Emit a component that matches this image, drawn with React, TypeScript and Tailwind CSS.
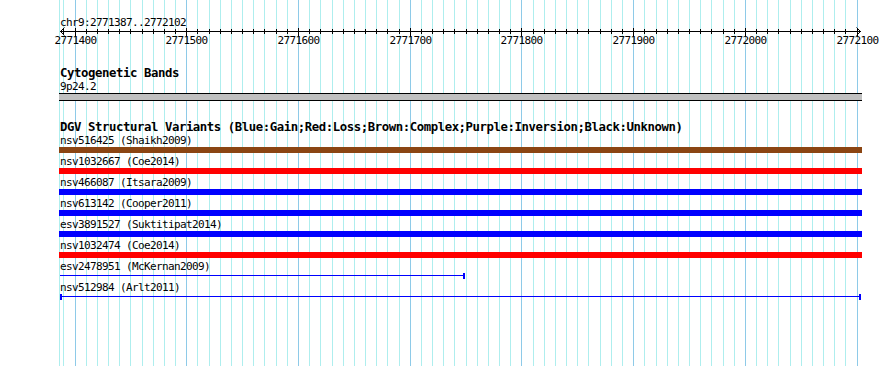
// App.tsx
const START = 2771387;
const END = 2772102;
const LEFT = 60;
const WIDTH = 800;

const bpToX = (p: number) =>
  Math.round(LEFT + ((p - START) * WIDTH) / (END - START + 1));

const gridPositions: number[] = [];
for (let p = 2771390; p <= 2772100; p += 10) gridPositions.push(p);

const majorLabels = [2771400, 2771500, 2771600, 2771700, 2771800, 2771900, 2772000, 2772100];

type Variant = {
  id: string;
  study: string;
  kind: "bar" | "line";
  color?: string;
  end?: number; // right pixel for thin features
  leftCap?: boolean;
};

const variants: Variant[] = [
  { id: "nsv516425", study: "Shaikh2009", kind: "bar", color: "bg-[#8b4513]" },
  { id: "nsv1032667", study: "Coe2014", kind: "bar", color: "bg-[#ff0000]" },
  { id: "nsv466087", study: "Itsara2009", kind: "bar", color: "bg-[#0000ff]" },
  { id: "nsv613142", study: "Cooper2011", kind: "bar", color: "bg-[#0000ff]" },
  { id: "esv3891527", study: "Suktitipat2014", kind: "bar", color: "bg-[#0000ff]" },
  { id: "nsv1032474", study: "Coe2014", kind: "bar", color: "bg-[#ff0000]" },
  { id: "esv2478951", study: "McKernan2009", kind: "line", end: 464, leftCap: false },
  { id: "nsv512984", study: "Arlt2011", kind: "line", end: 860, leftCap: true },
];

// small = 6px advance, bold title = 7px advance
const small = "text-[11px] leading-[13px] tracking-[-0.62px] whitespace-nowrap";
const title = "text-[12.3px] leading-[13px] tracking-[-0.41px] font-bold whitespace-nowrap";

function Grid() {
  return (
    <svg className="absolute inset-0" width={890} height={366}>
      <line x1={59.5} y1={0} x2={59.5} y2={366} stroke="#aeeeee" strokeWidth={1} />
      {gridPositions.map((p) => {
        const x = bpToX(p) + 0.5;
        const major = p % 100 === 0;
        return (
          <line
            key={p}
            x1={x}
            y1={0}
            x2={x}
            y2={366}
            stroke={major ? "#8ecae8" : "#aeeeee"}
            strokeWidth={1}
          />
        );
      })}
    </svg>
  );
}

function Ruler() {
  return (
    <div className="relative -ml-[60px] h-[18px] w-[890px]">
      <svg className="absolute left-0 top-0 overflow-visible" width={890} height={18}>
        <line x1={60} y1={2.5} x2={861} y2={2.5} stroke="#000" strokeWidth={1} />
        {/* arrows */}
        <polyline points="64.5,-1.5 60.5,2.5 64.5,6.5" fill="none" stroke="#000" strokeWidth={1} />
        <polyline points="856.5,-1.5 860.5,2.5 856.5,6.5" fill="none" stroke="#000" strokeWidth={1} />
        {gridPositions.map((p) => {
          const x = bpToX(p) + 0.5;
          const major = p % 100 === 0;
          return (
            <line
              key={p}
              x1={x}
              y1={major ? -1 : 0}
              x2={x}
              y2={major ? 7 : 5}
              stroke="#000"
              strokeWidth={1}
            />
          );
        })}
      </svg>
      {majorLabels.map((p) => (
        <div
          key={p}
          className={`absolute top-[5px] -translate-x-1/2 ${small}`}
          style={{ left: bpToX(p) + 0.5 }}
        >
          {p}
        </div>
      ))}
    </div>
  );
}

function VariantRow({ v }: { v: Variant }) {
  return (
    <div className="pb-[2px]">
      <div className={small}>
        {v.id} ({v.study})
      </div>
      {v.kind === "bar" ? (
        <div className={`-ml-px h-[6px] w-[803px] ${v.color}`} />
      ) : (
        <div className="flex h-[6px]" style={{ width: (v.end ?? 860) - LEFT + 1 }}>
          {v.leftCap && <div className="h-full w-[2px] bg-[#0000ff]" />}
          <div className="mt-[2px] h-px flex-1 bg-[#0000ff]" />
          <div className="h-full w-[2px] bg-[#0000ff]" />
        </div>
      )}
    </div>
  );
}

export default function App() {
  return (
    <div className="relative h-[366px] w-[890px] overflow-hidden bg-white font-['DejaVu_Sans_Mono',monospace] text-black">
      <Grid />

      <div className="relative pl-[60px]">
        {/* Position header */}
        <div className={`h-[29px] pt-[16px] ${small}`}>chr9:2771387..2772102</div>
        <Ruler />

        {/* Cytogenetic Bands */}
        <div className={`mt-[20px] ${title}`}>Cytogenetic Bands</div>
        <div className={small}>9p24.2</div>
        <div className="-ml-px h-[8px] w-[803px] border-y border-black bg-[#c0c0c0]" />

        {/* DGV */}
        <div className={`mt-[20px] ${title}`}>
          DGV Structural Variants (Blue:Gain;Red:Loss;Brown:Complex;Purple:Inversion;Black:Unknown)
        </div>
        {variants.map((v) => (
          <VariantRow key={v.id} v={v} />
        ))}
      </div>
    </div>
  );
}
